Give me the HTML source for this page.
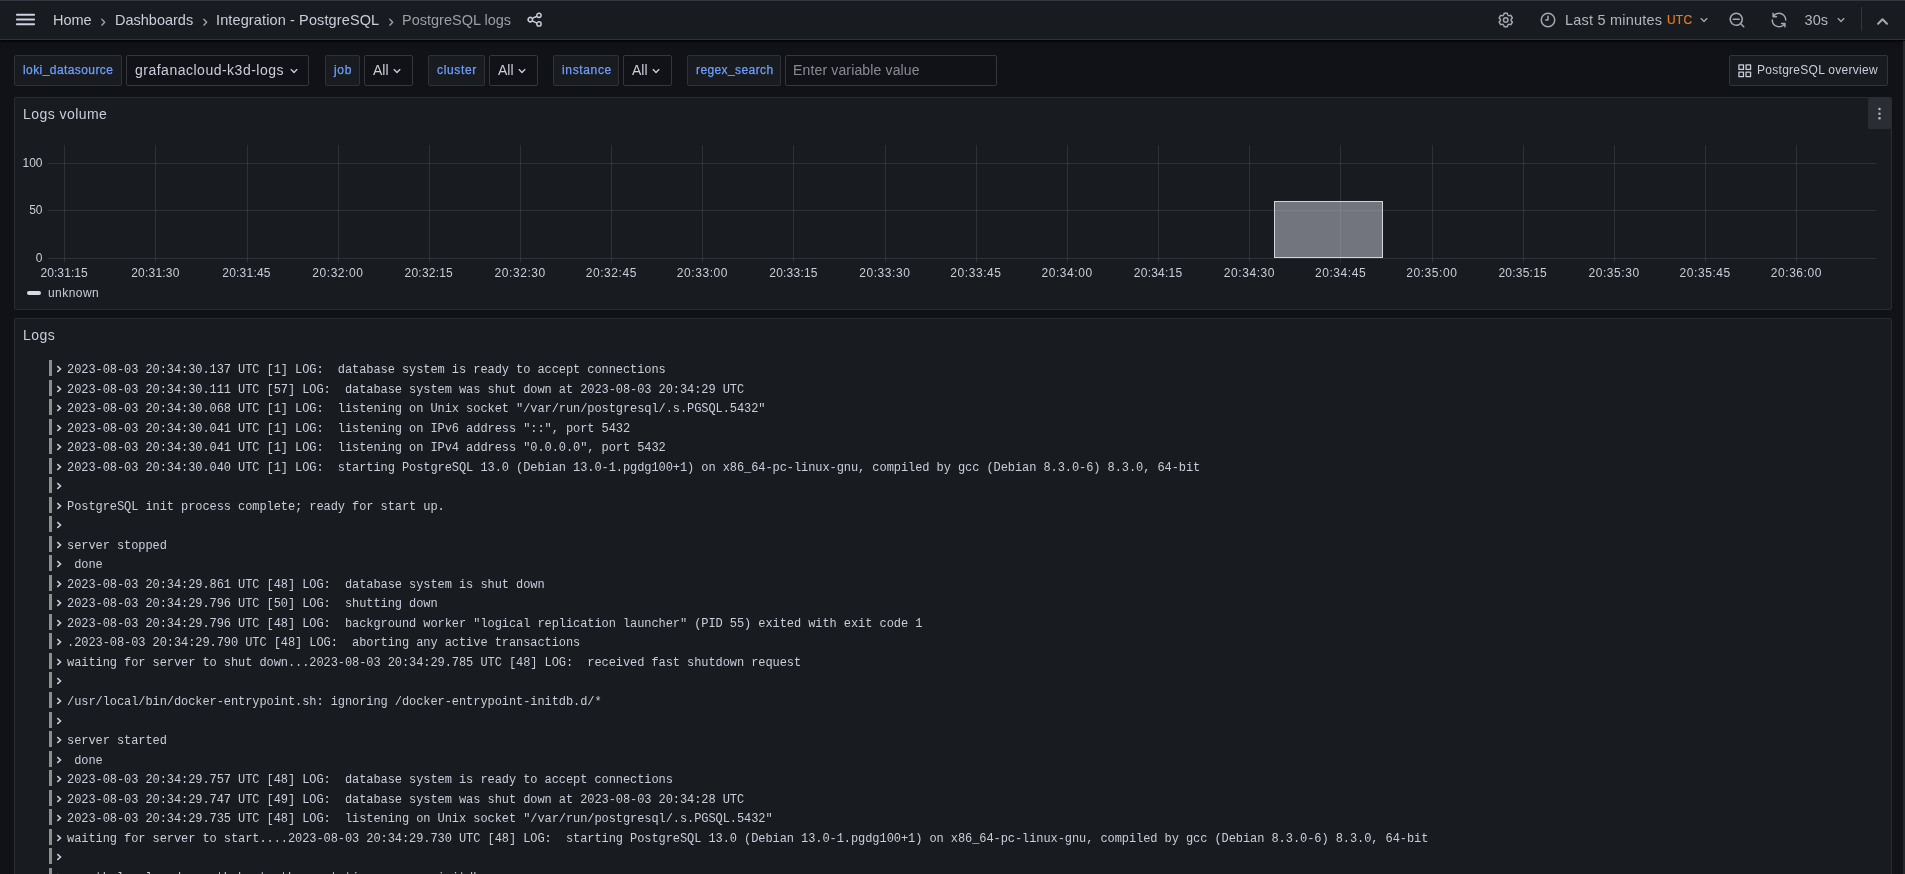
<!DOCTYPE html>
<html><head><meta charset="utf-8">
<style>
*{box-sizing:border-box;margin:0;padding:0}
html,body{width:1905px;height:874px;overflow:hidden;background:#111217;font-family:"Liberation Sans",sans-serif;color:#ccccdc}
.abs{position:absolute}
#nav{position:absolute;left:0;top:0;width:1905px;height:40px;background:#181b1f;border-top:1px solid #33363e;border-bottom:1px solid #30333a;box-shadow:0 1px 2px rgba(0,0,0,0.9),0 2px 5px rgba(0,0,0,0.35)}
.t14{font-size:14.5px;letter-spacing:0px;white-space:nowrap;line-height:16px}
.crumb{position:absolute;top:11.6px;color:#ccccdc}
.lbl{position:absolute;top:55px;height:31px;background:#181b1f;border:1px solid #2f3137;border-radius:2px;color:#6e9fff;font-size:12px;letter-spacing:0.65px;line-height:29px;padding-left:8px;white-space:nowrap;-webkit-text-stroke:0.25px #6e9fff}
.sel{position:absolute;top:55px;height:31px;background:#111217;border:1px solid #34363c;border-radius:2px;color:#ccccdc;font-size:14px;letter-spacing:0.5px;line-height:29px;padding-left:8px;white-space:nowrap}
.panel{position:absolute;left:14px;width:1878px;background:#181b1f;border:1px solid #2a2c32;border-radius:2px}
.ptitle{position:absolute;font-size:14px;letter-spacing:0.45px;line-height:16px;color:#ccccdc;white-space:nowrap}
.yl{position:absolute;font-size:12px;line-height:14px;color:#ccccdc;text-align:right;width:30px}
.xl{position:absolute;font-size:12px;line-height:14px;color:#ccccdc;width:80px;text-align:center;white-space:nowrap}
.row{position:absolute;left:49px;height:19.53px;white-space:pre;font-family:"Liberation Mono",monospace;font-size:12px;letter-spacing:-0.074px;color:#ccccdc}
.row .bar{position:absolute;left:0;top:0;width:3px;height:16px;background:#8e8e8e}
.row svg{position:absolute;left:6.5px;top:5px}
.row .tx{position:absolute;left:18px;top:2px;line-height:16px}
</style></head><body><div id="wrap" style="position:absolute;left:0;top:0;width:1905px;height:874px;overflow:hidden;will-change:transform">
<div id="nav"></div>
<svg class="abs" style="left:14px;top:8px" width="23" height="23" viewBox="0 0 24 24"><path fill="#d0d0e0" d="M3,8H21a1,1,0,0,0,0-2H3A1,1,0,0,0,3,8Zm18,8H3a1,1,0,0,0,0,2H21a1,1,0,0,0,0-2Zm0-5H3a1,1,0,0,0,0,2H21a1,1,0,0,0,0-2Z"/></svg>
<div class="crumb t14" style="left:53px">Home</div>
<svg class="abs" style="left:94.9px;top:13.7px" width="16.5" height="16.5" viewBox="0 0 24 24"><path fill="#a0a0b0" d="M14.83,11.29,10.59,7.05a1,1,0,0,0-1.42,0,1,1,0,0,0,0,1.41L12.71,12,9.17,15.54a1,1,0,0,0,0,1.41,1,1,0,0,0,.71.29,1,1,0,0,0,.71-.29l4.24-4.24A1,1,0,0,0,14.83,11.29Z"/></svg>
<div class="crumb t14" style="left:115px">Dashboards</div>
<svg class="abs" style="left:196.5px;top:13.7px" width="16.5" height="16.5" viewBox="0 0 24 24"><path fill="#a0a0b0" d="M14.83,11.29,10.59,7.05a1,1,0,0,0-1.42,0,1,1,0,0,0,0,1.41L12.71,12,9.17,15.54a1,1,0,0,0,0,1.41,1,1,0,0,0,.71.29,1,1,0,0,0,.71-.29l4.24-4.24A1,1,0,0,0,14.83,11.29Z"/></svg>
<div class="crumb t14" style="left:216px;letter-spacing:0.12px">Integration - PostgreSQL</div>
<svg class="abs" style="left:382.8px;top:13.7px" width="16.5" height="16.5" viewBox="0 0 24 24"><path fill="#a0a0b0" d="M14.83,11.29,10.59,7.05a1,1,0,0,0-1.42,0,1,1,0,0,0,0,1.41L12.71,12,9.17,15.54a1,1,0,0,0,0,1.41,1,1,0,0,0,.71.29,1,1,0,0,0,.71-.29l4.24-4.24A1,1,0,0,0,14.83,11.29Z"/></svg>
<div class="crumb t14" style="left:402px;color:#9d9dab">PostgreSQL logs</div>
<svg class="abs" style="left:526px;top:11px" width="17.3" height="17.3" viewBox="0 0 24 24"><path fill="#ccccdc" d="M18,14a4,4,0,0,0-3.08,1.48l-5.1-2.35a3.64,3.64,0,0,0,0-2.26l5.1-2.35A4,4,0,1,0,14,6a4.170,4.170,0,0,0,.07.71L8.79,9.14a4,4,0,1,0,0,5.72l5.28,2.43A4.170,4.170,0,0,0,14,18a4,4,0,1,0,4-4ZM18,4a2,2,0,1,1-2,2A2,2,0,0,1,18,4ZM6,14a2,2,0,1,1,2-2A2,2,0,0,1,6,14Zm12,6a2,2,0,1,1,2-2A2,2,0,0,1,18,20Z"/></svg>
<svg class="abs" style="left:1496.5px;top:10.5px" width="18" height="18" viewBox="0 0 24 24"><path fill="#a6a6b4" d="M19.9 12.66a1 1 0 0 1 0-1.32l1.28-1.44a1 1 0 0 0 .12-1.17l-2-3.46a1 1 0 0 0-1.07-.48l-1.88.38a1 1 0 0 1-1.15-.66l-.61-1.83a1 1 0 0 0-.95-.68h-4a1 1 0 0 0-1 .68l-.56 1.830a1 1 0 0 1-1.15.66L5 4.79a1 1 0 0 0-1 .48L2 8.73a1 1 0 0 0 .1 1.17l1.27 1.44a1 1 0 0 1 0 1.32L2.1 14.1a1 1 0 0 0-.1 1.17l2 3.46a1 1 0 0 0 1.07.48l1.88-.38a1 1 0 0 1 1.15.66l.61 1.83a1 1 0 0 0 1 .68h4a1 1 0 0 0 .95-.68l.61-1.83a1 1 0 0 1 1.15-.66l1.88.38a1 1 0 0 0 1.07-.48l2-3.46a1 1 0 0 0-.12-1.17ZM18.41 14l.8.9-1.28 2.22-1.18-.24a3 3 0 0 0-3.45 2L12.92 20h-2.56L10 18.86a3 3 0 0 0-3.45-2l-1.18.24-1.300-2.21.8-.9a3 3 0 0 0 0-4l-.8-.9 1.28-2.2 1.18.24a3 3 0 0 0 3.45-2L10.36 4h2.56l.38 1.14a3 3 0 0 0 3.45 2l1.18-.24 1.28 2.22-.8.9a3 3 0 0 0 0 3.980Zm-6.77-6a4 4 0 1 0 4 4 4 4 0 0 0-4-4Zm0 6a2 2 0 1 1 2-2 2 2 0 0 1-2 2Z"/></svg>
<svg class="abs" style="left:1538.5px;top:10.5px" width="18" height="18" viewBox="0 0 24 24"><path fill="#a6a6b4" d="M12,2A10,10,0,1,0,22,12,10,10,0,0,0,12,2Zm0,18a8,8,0,1,1,8-8A8,8,0,0,1,12,20Zm0-14a1,1,0,0,0-1,1v4H9a1,1,0,0,0,0,2h3a1,1,0,0,0,1-1V7A1,1,0,0,0,12,6Z"/></svg>
<div class="abs t14" style="left:1565px;top:11.6px;color:#b4b4c2;letter-spacing:0.2px">Last 5 minutes</div>
<div class="abs" style="left:1667px;top:12.5px;font-size:12px;line-height:14px;color:#eb7b18;letter-spacing:0.2px;-webkit-text-stroke:0.2px #eb7b18">UTC</div>
<svg class="abs" style="left:1695.5px;top:12px" width="16" height="16" viewBox="0 0 24 24"><path fill="#a6a6b4" d="M17,9.17a1,1,0,0,0-1.41,0L12,12.71,8.46,9.170a1,1,0,0,0-1.41,0,1,1,0,0,0,0,1.42l4.24,4.24a1,1,0,0,0,1.42,0L17,10.59A1,1,0,0,0,17,9.17Z"/></svg>
<svg class="abs" style="left:1728px;top:11px" width="18" height="18" viewBox="0 0 24 24"><path fill="#a6a6b4" d="M21.71,20.29,18,16.610A9,9,0,1,0,16.61,18l3.68,3.68a1,1,0,0,0,1.42,0A1,1,0,0,0,21.71,20.29ZM11,18a7,7,0,1,1,7-7A7,7,0,0,1,11,18Zm4-8H7a1,1,0,0,0,0,2h8a1,1,0,0,0,0-2Z"/></svg>
<svg class="abs" style="left:1769.8px;top:10.5px" width="18" height="18" viewBox="0 0 24 24"><path fill="#a6a6b4" d="M19.91,15.51H15.38a1,1,0,0,0,0,2h2.4A8,8,0,0,1,4,12a1,1,0,0,0-2,0,10,10,0,0,0,16.88,7.23V21a1,1,0,0,0,2,0V16.5A1,1,0,0,0,19.91,15.51ZM12,2A10,10,0,0,0,5.12,4.77V3a1,1,0,0,0-2,0V7.5a1,1,0,0,0,1,1h4.5a1,1,0,0,0,0-2H6.220A8,8,0,0,1,20,12a1,1,0,0,0,2,0A10,10,0,0,0,12,2Z"/></svg>
<div class="abs t14" style="left:1804.5px;top:11.6px;color:#b4b4c2;letter-spacing:0.1px">30s</div>
<svg class="abs" style="left:1832.5px;top:12px" width="16" height="16" viewBox="0 0 24 24"><path fill="#a6a6b4" d="M17,9.17a1,1,0,0,0-1.41,0L12,12.71,8.46,9.170a1,1,0,0,0-1.41,0,1,1,0,0,0,0,1.42l4.24,4.24a1,1,0,0,0,1.42,0L17,10.59A1,1,0,0,0,17,9.17Z"/></svg>
<div class="abs" style="left:1861px;top:7px;width:1px;height:24px;background:#33353b"></div>
<svg class="abs" style="left:1869.7px;top:8.95px" width="25" height="25" viewBox="0 0 24 24"><path fill="#a6a6b4" d="M17,13.41,12.71,9.17a1,1,0,0,0-1.42,0L7.050,13.41a1,1,0,0,0,0,1.42,1,1,0,0,0,1.41,0L12,11.29l3.54,3.54a1,1,0,0,0,.7.29,1,1,0,0,0,.71-.29A1,1,0,0,0,17,13.41Z"/></svg>
<div class="lbl" style="left:14px;width:108px;letter-spacing:0.42px">loki<span style="position:relative;top:-1.5px">_</span>datasource</div>
<div class="sel" style="left:126px;width:183px">grafanacloud-k3d-logs</div>
<svg class="abs" style="left:286.1px;top:62.8px" width="16" height="16" viewBox="0 0 24 24"><path fill="#ccccdc" d="M17,9.17a1,1,0,0,0-1.41,0L12,12.71,8.46,9.170a1,1,0,0,0-1.41,0,1,1,0,0,0,0,1.42l4.24,4.24a1,1,0,0,0,1.42,0L17,10.59A1,1,0,0,0,17,9.17Z"/></svg>
<div class="lbl" style="left:325px;width:35px">job</div>
<div class="sel" style="left:364px;width:49px;letter-spacing:0">All</div>
<svg class="abs" style="left:388.7px;top:62.8px" width="16" height="16" viewBox="0 0 24 24"><path fill="#ccccdc" d="M17,9.17a1,1,0,0,0-1.41,0L12,12.71,8.46,9.170a1,1,0,0,0-1.41,0,1,1,0,0,0,0,1.42l4.24,4.24a1,1,0,0,0,1.42,0L17,10.59A1,1,0,0,0,17,9.17Z"/></svg>
<div class="lbl" style="left:428px;width:57px">cluster</div>
<div class="sel" style="left:489px;width:49px;letter-spacing:0">All</div>
<svg class="abs" style="left:513.7px;top:62.8px" width="16" height="16" viewBox="0 0 24 24"><path fill="#ccccdc" d="M17,9.17a1,1,0,0,0-1.41,0L12,12.71,8.46,9.170a1,1,0,0,0-1.41,0,1,1,0,0,0,0,1.42l4.24,4.24a1,1,0,0,0,1.42,0L17,10.59A1,1,0,0,0,17,9.17Z"/></svg>
<div class="lbl" style="left:553px;width:66px">instance</div>
<div class="sel" style="left:623px;width:49px;letter-spacing:0">All</div>
<svg class="abs" style="left:647.7px;top:62.8px" width="16" height="16" viewBox="0 0 24 24"><path fill="#ccccdc" d="M17,9.17a1,1,0,0,0-1.41,0L12,12.71,8.46,9.170a1,1,0,0,0-1.41,0,1,1,0,0,0,0,1.42l4.24,4.24a1,1,0,0,0,1.42,0L17,10.59A1,1,0,0,0,17,9.17Z"/></svg>
<div class="lbl" style="left:687px;width:94px;letter-spacing:0.4px">regex<span style="position:relative;top:-1.5px">_</span>search</div>
<div class="sel" style="left:785px;width:212px;color:#8a8a96;letter-spacing:0.15px;padding-left:7px">Enter variable value</div>
<div class="abs" style="left:1729px;top:55px;width:159px;height:31px;background:#181b1f;border:1px solid #33353b;border-radius:2px"></div>
<svg class="abs" style="left:1736.7px;top:62.9px" width="15.5" height="15.5" viewBox="0 0 24 24"><path fill="#ccccdc" d="M10,13H3a1,1,0,0,0-1,1v7a1,1,0,0,0,1,1h7a1,1,0,0,0,1-1V14A1,1,0,0,0,10,13ZM9,20H4V15H9ZM21,2H14a1,1,0,0,0-1,1v7a1,1,0,0,0,1,1h7a1,1,0,0,0,1-1V3A1,1,0,0,0,21,2ZM20,9H15V4h5Zm1,4H14a1,1,0,0,0-1,1v7a1,1,0,0,0,1,1h7a1,1,0,0,0,1-1V14A1,1,0,0,0,21,13Zm-1,7H15V15h5ZM10,2H3A1,1,0,0,0,2,3v7a1,1,0,0,0,1,1h7a1,1,0,0,0,1-1V3A1,1,0,0,0,10,2ZM9,9H4V4H9Z"/></svg>
<div class="abs" style="left:1757px;top:63px;font-size:12px;line-height:14px;letter-spacing:0.28px;color:#ccccdc;white-space:nowrap">PostgreSQL overview</div>
<div class="panel" style="top:97px;height:213px"></div>
<div class="ptitle" style="left:23px;top:106px">Logs volume</div>
<div class="abs" style="left:1868px;top:98px;width:23px;height:31px;background:#2a2d33;border-radius:2px"></div>
<svg class="abs" style="left:1877px;top:105px" width="5" height="16" viewBox="0 0 5 16"><g fill="#b4b4c2"><circle cx="2.5" cy="4.1" r="1.25"/><circle cx="2.5" cy="8.7" r="1.25"/><circle cx="2.5" cy="13.3" r="1.25"/></g></svg>
<svg class="abs" style="left:0;top:0" width="1905" height="320" viewBox="0 0 1905 320">
<line x1="48" y1="163.5" x2="1876" y2="163.5" stroke="rgba(204,204,220,0.12)" stroke-width="1"/>
<line x1="48" y1="210.5" x2="1876" y2="210.5" stroke="rgba(204,204,220,0.12)" stroke-width="1"/>
<line x1="48" y1="258.5" x2="1876" y2="258.5" stroke="rgba(204,204,220,0.12)" stroke-width="1"/>
<line x1="64.5" y1="145" x2="64.5" y2="262.5" stroke="rgba(204,204,220,0.12)" stroke-width="1"/>
<line x1="155.5" y1="145" x2="155.5" y2="262.5" stroke="rgba(204,204,220,0.12)" stroke-width="1"/>
<line x1="247.5" y1="145" x2="247.5" y2="262.5" stroke="rgba(204,204,220,0.12)" stroke-width="1"/>
<line x1="338.5" y1="145" x2="338.5" y2="262.5" stroke="rgba(204,204,220,0.12)" stroke-width="1"/>
<line x1="429.5" y1="145" x2="429.5" y2="262.5" stroke="rgba(204,204,220,0.12)" stroke-width="1"/>
<line x1="520.5" y1="145" x2="520.5" y2="262.5" stroke="rgba(204,204,220,0.12)" stroke-width="1"/>
<line x1="611.5" y1="145" x2="611.5" y2="262.5" stroke="rgba(204,204,220,0.12)" stroke-width="1"/>
<line x1="702.5" y1="145" x2="702.5" y2="262.5" stroke="rgba(204,204,220,0.12)" stroke-width="1"/>
<line x1="793.5" y1="145" x2="793.5" y2="262.5" stroke="rgba(204,204,220,0.12)" stroke-width="1"/>
<line x1="885.5" y1="145" x2="885.5" y2="262.5" stroke="rgba(204,204,220,0.12)" stroke-width="1"/>
<line x1="976.5" y1="145" x2="976.5" y2="262.5" stroke="rgba(204,204,220,0.12)" stroke-width="1"/>
<line x1="1067.5" y1="145" x2="1067.5" y2="262.5" stroke="rgba(204,204,220,0.12)" stroke-width="1"/>
<line x1="1158.5" y1="145" x2="1158.5" y2="262.5" stroke="rgba(204,204,220,0.12)" stroke-width="1"/>
<line x1="1249.5" y1="145" x2="1249.5" y2="262.5" stroke="rgba(204,204,220,0.12)" stroke-width="1"/>
<line x1="1340.5" y1="145" x2="1340.5" y2="262.5" stroke="rgba(204,204,220,0.12)" stroke-width="1"/>
<line x1="1432.5" y1="145" x2="1432.5" y2="262.5" stroke="rgba(204,204,220,0.12)" stroke-width="1"/>
<line x1="1523.5" y1="145" x2="1523.5" y2="262.5" stroke="rgba(204,204,220,0.12)" stroke-width="1"/>
<line x1="1614.5" y1="145" x2="1614.5" y2="262.5" stroke="rgba(204,204,220,0.12)" stroke-width="1"/>
<line x1="1705.5" y1="145" x2="1705.5" y2="262.5" stroke="rgba(204,204,220,0.12)" stroke-width="1"/>
<line x1="1796.5" y1="145" x2="1796.5" y2="262.5" stroke="rgba(204,204,220,0.12)" stroke-width="1"/>
<rect x="1274.5" y="201.5" width="108" height="56" fill="rgba(204,207,220,0.5)" stroke="#d4d4e0" stroke-width="1"/>
</svg>
<div class="yl" style="left:12.5px;top:156px">100</div>
<div class="yl" style="left:12.5px;top:203px">50</div>
<div class="yl" style="left:12.5px;top:251px">0</div>
<div class="xl" style="left:24.1px;top:266px;letter-spacing:0.10px;text-indent:0.10px">20:31:15</div>
<div class="xl" style="left:115.3px;top:266px;letter-spacing:0.22px;text-indent:0.22px">20:31:30</div>
<div class="xl" style="left:206.4px;top:266px;letter-spacing:0.22px;text-indent:0.22px">20:31:45</div>
<div class="xl" style="left:297.6px;top:266px;letter-spacing:0.57px;text-indent:0.57px">20:32:00</div>
<div class="xl" style="left:388.7px;top:266px;letter-spacing:0.22px;text-indent:0.22px">20:32:15</div>
<div class="xl" style="left:479.9px;top:266px;letter-spacing:0.57px;text-indent:0.57px">20:32:30</div>
<div class="xl" style="left:571.0px;top:266px;letter-spacing:0.57px;text-indent:0.57px">20:32:45</div>
<div class="xl" style="left:662.2px;top:266px;letter-spacing:0.57px;text-indent:0.57px">20:33:00</div>
<div class="xl" style="left:753.4px;top:266px;letter-spacing:0.22px;text-indent:0.22px">20:33:15</div>
<div class="xl" style="left:844.5px;top:266px;letter-spacing:0.57px;text-indent:0.57px">20:33:30</div>
<div class="xl" style="left:935.7px;top:266px;letter-spacing:0.57px;text-indent:0.57px">20:33:45</div>
<div class="xl" style="left:1026.8px;top:266px;letter-spacing:0.57px;text-indent:0.57px">20:34:00</div>
<div class="xl" style="left:1118.0px;top:266px;letter-spacing:0.22px;text-indent:0.22px">20:34:15</div>
<div class="xl" style="left:1209.2px;top:266px;letter-spacing:0.57px;text-indent:0.57px">20:34:30</div>
<div class="xl" style="left:1300.3px;top:266px;letter-spacing:0.57px;text-indent:0.57px">20:34:45</div>
<div class="xl" style="left:1391.5px;top:266px;letter-spacing:0.57px;text-indent:0.57px">20:35:00</div>
<div class="xl" style="left:1482.6px;top:266px;letter-spacing:0.22px;text-indent:0.22px">20:35:15</div>
<div class="xl" style="left:1573.8px;top:266px;letter-spacing:0.57px;text-indent:0.57px">20:35:30</div>
<div class="xl" style="left:1664.9px;top:266px;letter-spacing:0.57px;text-indent:0.57px">20:35:45</div>
<div class="xl" style="left:1756.1px;top:266px;letter-spacing:0.57px;text-indent:0.57px">20:36:00</div>
<div class="abs" style="left:27px;top:291px;width:14px;height:4px;border-radius:2px;background:#d8d9e6"></div>
<div class="abs" style="left:48px;top:286px;font-size:12px;line-height:14px;letter-spacing:0.45px;color:#ccccdc">unknown</div>
<div class="panel" style="top:318px;height:600px"></div>
<div class="ptitle" style="left:23px;top:327px">Logs</div>
<div class="row" style="top:360.00px"><div class="bar"></div><svg width="6" height="8" viewBox="0 0 6 8"><path d="M1.3 1.1 L4.5 4 L1.3 6.9" fill="none" stroke="#ccccdc" stroke-width="1.55"/></svg><div class="tx">2023-08-03 20:34:30.137 UTC [1] LOG:  database system is ready to accept connections</div></div>
<div class="row" style="top:379.53px"><div class="bar"></div><svg width="6" height="8" viewBox="0 0 6 8"><path d="M1.3 1.1 L4.5 4 L1.3 6.9" fill="none" stroke="#ccccdc" stroke-width="1.55"/></svg><div class="tx">2023-08-03 20:34:30.111 UTC [57] LOG:  database system was shut down at 2023-08-03 20:34:29 UTC</div></div>
<div class="row" style="top:399.06px"><div class="bar"></div><svg width="6" height="8" viewBox="0 0 6 8"><path d="M1.3 1.1 L4.5 4 L1.3 6.9" fill="none" stroke="#ccccdc" stroke-width="1.55"/></svg><div class="tx">2023-08-03 20:34:30.068 UTC [1] LOG:  listening on Unix socket &quot;/var/run/postgresql/.s.PGSQL.5432&quot;</div></div>
<div class="row" style="top:418.59px"><div class="bar"></div><svg width="6" height="8" viewBox="0 0 6 8"><path d="M1.3 1.1 L4.5 4 L1.3 6.9" fill="none" stroke="#ccccdc" stroke-width="1.55"/></svg><div class="tx">2023-08-03 20:34:30.041 UTC [1] LOG:  listening on IPv6 address &quot;::&quot;, port 5432</div></div>
<div class="row" style="top:438.12px"><div class="bar"></div><svg width="6" height="8" viewBox="0 0 6 8"><path d="M1.3 1.1 L4.5 4 L1.3 6.9" fill="none" stroke="#ccccdc" stroke-width="1.55"/></svg><div class="tx">2023-08-03 20:34:30.041 UTC [1] LOG:  listening on IPv4 address &quot;0.0.0.0&quot;, port 5432</div></div>
<div class="row" style="top:457.65px"><div class="bar"></div><svg width="6" height="8" viewBox="0 0 6 8"><path d="M1.3 1.1 L4.5 4 L1.3 6.9" fill="none" stroke="#ccccdc" stroke-width="1.55"/></svg><div class="tx">2023-08-03 20:34:30.040 UTC [1] LOG:  starting PostgreSQL 13.0 (Debian 13.0-1.pgdg100+1) on x86_64-pc-linux-gnu, compiled by gcc (Debian 8.3.0-6) 8.3.0, 64-bit</div></div>
<div class="row" style="top:477.18px"><div class="bar"></div><svg width="6" height="8" viewBox="0 0 6 8"><path d="M1.3 1.1 L4.5 4 L1.3 6.9" fill="none" stroke="#ccccdc" stroke-width="1.55"/></svg><div class="tx"></div></div>
<div class="row" style="top:496.71px"><div class="bar"></div><svg width="6" height="8" viewBox="0 0 6 8"><path d="M1.3 1.1 L4.5 4 L1.3 6.9" fill="none" stroke="#ccccdc" stroke-width="1.55"/></svg><div class="tx">PostgreSQL init process complete; ready for start up.</div></div>
<div class="row" style="top:516.24px"><div class="bar"></div><svg width="6" height="8" viewBox="0 0 6 8"><path d="M1.3 1.1 L4.5 4 L1.3 6.9" fill="none" stroke="#ccccdc" stroke-width="1.55"/></svg><div class="tx"></div></div>
<div class="row" style="top:535.77px"><div class="bar"></div><svg width="6" height="8" viewBox="0 0 6 8"><path d="M1.3 1.1 L4.5 4 L1.3 6.9" fill="none" stroke="#ccccdc" stroke-width="1.55"/></svg><div class="tx">server stopped</div></div>
<div class="row" style="top:555.30px"><div class="bar"></div><svg width="6" height="8" viewBox="0 0 6 8"><path d="M1.3 1.1 L4.5 4 L1.3 6.9" fill="none" stroke="#ccccdc" stroke-width="1.55"/></svg><div class="tx"> done</div></div>
<div class="row" style="top:574.83px"><div class="bar"></div><svg width="6" height="8" viewBox="0 0 6 8"><path d="M1.3 1.1 L4.5 4 L1.3 6.9" fill="none" stroke="#ccccdc" stroke-width="1.55"/></svg><div class="tx">2023-08-03 20:34:29.861 UTC [48] LOG:  database system is shut down</div></div>
<div class="row" style="top:594.36px"><div class="bar"></div><svg width="6" height="8" viewBox="0 0 6 8"><path d="M1.3 1.1 L4.5 4 L1.3 6.9" fill="none" stroke="#ccccdc" stroke-width="1.55"/></svg><div class="tx">2023-08-03 20:34:29.796 UTC [50] LOG:  shutting down</div></div>
<div class="row" style="top:613.89px"><div class="bar"></div><svg width="6" height="8" viewBox="0 0 6 8"><path d="M1.3 1.1 L4.5 4 L1.3 6.9" fill="none" stroke="#ccccdc" stroke-width="1.55"/></svg><div class="tx">2023-08-03 20:34:29.796 UTC [48] LOG:  background worker &quot;logical replication launcher&quot; (PID 55) exited with exit code 1</div></div>
<div class="row" style="top:633.42px"><div class="bar"></div><svg width="6" height="8" viewBox="0 0 6 8"><path d="M1.3 1.1 L4.5 4 L1.3 6.9" fill="none" stroke="#ccccdc" stroke-width="1.55"/></svg><div class="tx">.2023-08-03 20:34:29.790 UTC [48] LOG:  aborting any active transactions</div></div>
<div class="row" style="top:652.95px"><div class="bar"></div><svg width="6" height="8" viewBox="0 0 6 8"><path d="M1.3 1.1 L4.5 4 L1.3 6.9" fill="none" stroke="#ccccdc" stroke-width="1.55"/></svg><div class="tx">waiting for server to shut down...2023-08-03 20:34:29.785 UTC [48] LOG:  received fast shutdown request</div></div>
<div class="row" style="top:672.48px"><div class="bar"></div><svg width="6" height="8" viewBox="0 0 6 8"><path d="M1.3 1.1 L4.5 4 L1.3 6.9" fill="none" stroke="#ccccdc" stroke-width="1.55"/></svg><div class="tx"></div></div>
<div class="row" style="top:692.01px"><div class="bar"></div><svg width="6" height="8" viewBox="0 0 6 8"><path d="M1.3 1.1 L4.5 4 L1.3 6.9" fill="none" stroke="#ccccdc" stroke-width="1.55"/></svg><div class="tx">/usr/local/bin/docker-entrypoint.sh: ignoring /docker-entrypoint-initdb.d/*</div></div>
<div class="row" style="top:711.54px"><div class="bar"></div><svg width="6" height="8" viewBox="0 0 6 8"><path d="M1.3 1.1 L4.5 4 L1.3 6.9" fill="none" stroke="#ccccdc" stroke-width="1.55"/></svg><div class="tx"></div></div>
<div class="row" style="top:731.07px"><div class="bar"></div><svg width="6" height="8" viewBox="0 0 6 8"><path d="M1.3 1.1 L4.5 4 L1.3 6.9" fill="none" stroke="#ccccdc" stroke-width="1.55"/></svg><div class="tx">server started</div></div>
<div class="row" style="top:750.60px"><div class="bar"></div><svg width="6" height="8" viewBox="0 0 6 8"><path d="M1.3 1.1 L4.5 4 L1.3 6.9" fill="none" stroke="#ccccdc" stroke-width="1.55"/></svg><div class="tx"> done</div></div>
<div class="row" style="top:770.13px"><div class="bar"></div><svg width="6" height="8" viewBox="0 0 6 8"><path d="M1.3 1.1 L4.5 4 L1.3 6.9" fill="none" stroke="#ccccdc" stroke-width="1.55"/></svg><div class="tx">2023-08-03 20:34:29.757 UTC [48] LOG:  database system is ready to accept connections</div></div>
<div class="row" style="top:789.66px"><div class="bar"></div><svg width="6" height="8" viewBox="0 0 6 8"><path d="M1.3 1.1 L4.5 4 L1.3 6.9" fill="none" stroke="#ccccdc" stroke-width="1.55"/></svg><div class="tx">2023-08-03 20:34:29.747 UTC [49] LOG:  database system was shut down at 2023-08-03 20:34:28 UTC</div></div>
<div class="row" style="top:809.19px"><div class="bar"></div><svg width="6" height="8" viewBox="0 0 6 8"><path d="M1.3 1.1 L4.5 4 L1.3 6.9" fill="none" stroke="#ccccdc" stroke-width="1.55"/></svg><div class="tx">2023-08-03 20:34:29.735 UTC [48] LOG:  listening on Unix socket &quot;/var/run/postgresql/.s.PGSQL.5432&quot;</div></div>
<div class="row" style="top:828.72px"><div class="bar"></div><svg width="6" height="8" viewBox="0 0 6 8"><path d="M1.3 1.1 L4.5 4 L1.3 6.9" fill="none" stroke="#ccccdc" stroke-width="1.55"/></svg><div class="tx">waiting for server to start....2023-08-03 20:34:29.730 UTC [48] LOG:  starting PostgreSQL 13.0 (Debian 13.0-1.pgdg100+1) on x86_64-pc-linux-gnu, compiled by gcc (Debian 8.3.0-6) 8.3.0, 64-bit</div></div>
<div class="row" style="top:848.25px"><div class="bar"></div><svg width="6" height="8" viewBox="0 0 6 8"><path d="M1.3 1.1 L4.5 4 L1.3 6.9" fill="none" stroke="#ccccdc" stroke-width="1.55"/></svg><div class="tx"></div></div>
<div class="row" style="top:867.78px"><div class="bar"></div><svg width="6" height="8" viewBox="0 0 6 8"><path d="M1.3 1.1 L4.5 4 L1.3 6.9" fill="none" stroke="#ccccdc" stroke-width="1.55"/></svg><div class="tx">--auth-local and --auth-host, the next time you run initdb.</div></div>
<div class="abs" style="left:1903px;top:41px;width:2px;height:833px;background:#25272c"></div>
</div></body></html>
